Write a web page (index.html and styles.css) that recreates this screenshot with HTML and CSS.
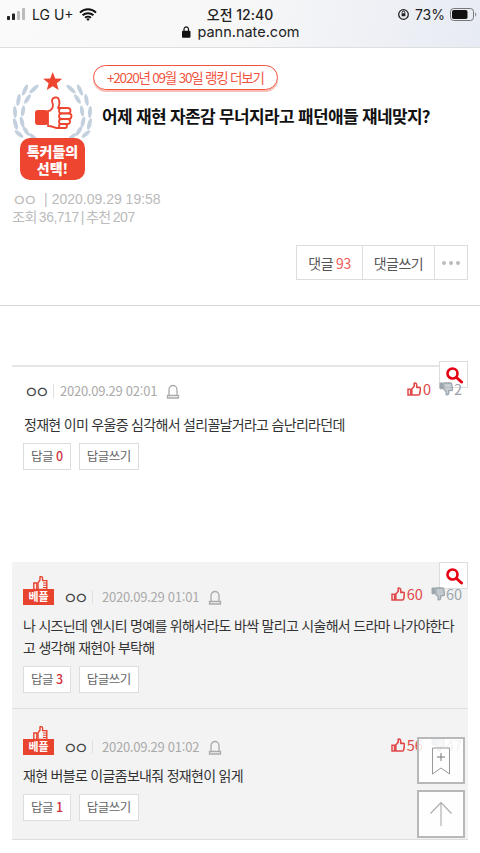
FILE: index.html
```html
<!DOCTYPE html>
<html lang="ko">
<head>
<meta charset="utf-8">
<title>pann.nate.com</title>
<link rel="stylesheet" href="styles.css">
</head>
<body>
<div class="page">
  <svg class="defs" width="0" height="0"><defs>
    <g id="thumb"><path d="M1 7.200h2.600v5.800H1z" fill="none" stroke="currentColor" stroke-width="1.500"/><path d="M4.800 7L7.200 4.200V1.300c1.500-.5 2.500.3 2.500 1.800v2.300h2.600c.8 0 1.200.5 1.200 1.200l-.8 5.300c-.1.6-.5 1.100-1.200 1.100H4.800z" fill="none" stroke="currentColor" stroke-width="1.600" stroke-linejoin="round"/></g>
    <g id="thumbdown"><path d="M1 1h2.600v5.800H1z" fill="currentColor" stroke="currentColor" stroke-width="1"/><path d="M4.800 7L7.200 9.800v2.900c1.500.5 2.500-.3 2.500-1.800V8.600h2.600c.8 0 1.200-.5 1.200-1.200l-.8-5.300C12.600 1.500 12.200 1 11.500 1H4.800z" fill="currentColor" fill-opacity=".55" stroke="currentColor" stroke-width="1.300" stroke-linejoin="round"/></g>
    <g id="bell"><path d="M3 11V5.500a4 4 0 0 1 8 0V11M1.500 11.500h11v2.500h-11z" fill="none" stroke="#aaa" stroke-width="1.300"/></g>
    <g id="lens"><circle cx="7.500" cy="7.500" r="5" fill="none" stroke="#e60012" stroke-width="2.600"/><path d="M11.500 11.500l5 4.500" stroke="#e60012" stroke-width="3" stroke-linecap="round"/></g>
    <g id="bestthumb"><path d="M0.800 7h3v6.500h-3z" fill="none" stroke="#e8432e" stroke-width="1.400"/><path d="M5 6.800L7 4V.8c1.600-.5 2.600.3 2.600 1.600V4.600h4.200v8.900H5z" fill="none" stroke="#e8432e" stroke-width="1.400"/><path d="M10 7h3.500M10 9.300h3.500M10 11.500h3.500" stroke="#e8432e" stroke-width="1.100"/></g>
    <g id="laurel" fill="#c3d0de">
      <ellipse cx="22" cy="19" rx="2" ry="6" transform="rotate(48 22 19)"/>
      <ellipse cx="13" cy="20" rx="2" ry="6" transform="rotate(25 13 20)"/>
      <ellipse cx="15.500" cy="29" rx="2" ry="5.500" transform="rotate(32 15.500 29)"/>
      <ellipse cx="6.500" cy="30" rx="2" ry="6" transform="rotate(10 6.500 30)"/>
      <ellipse cx="11" cy="41" rx="2" ry="5.500" transform="rotate(8 11 41)"/>
      <ellipse cx="3" cy="42" rx="2" ry="6" transform="rotate(-3 3 42)"/>
      <ellipse cx="10" cy="52" rx="2" ry="5.500" transform="rotate(-14 10 52)"/>
      <ellipse cx="3.500" cy="54" rx="2" ry="6" transform="rotate(-15 3.500 54)"/>
      <ellipse cx="14" cy="61" rx="2" ry="5.500" transform="rotate(-32 14 61)"/>
      <ellipse cx="7" cy="64" rx="2" ry="5.500" transform="rotate(-50 7 64)"/>
      <ellipse cx="21" cy="67" rx="1.800" ry="5" transform="rotate(-50 21 67)"/>
    </g>
  </defs></svg>

  <header class="status">
    <div class="status-row">
      <div class="status-left">
        <svg class="signal" width="20" height="12" viewBox="0 0 20 12"><rect x="0" y="8" width="3" height="4" rx=".7" fill="#222"/><rect x="5" y="5.500" width="3" height="6.500" rx=".7" fill="#222"/><rect x="10" y="3" width="3" height="9" rx=".7" fill="#bbb"/><rect x="15" y="0" width="3" height="12" rx=".7" fill="#bbb"/></svg>
        <span>LG U+</span>
        <svg class="wifi" width="18" height="13" viewBox="0 0 18 13"><path d="M1 4.600a11.500 11.500 0 0 1 16 0M3.600 7.300a7.800 7.800 0 0 1 10.800 0M6.100 9.800a4.200 4.200 0 0 1 5.800 0" fill="none" stroke="#111" stroke-width="2"/><path d="M9 13l-1.700-1.900a2.400 2.400 0 0 1 3.400 0z" fill="#111"/></svg>
      </div>
      <div class="status-time">오전 12:40</div>
      <div class="status-right">
        <svg width="13" height="13" viewBox="0 0 13 13"><circle cx="6.500" cy="6.500" r="4.800" fill="none" stroke="#222" stroke-width="1.300"/><rect x="4.600" y="5.200" width="3.800" height="3" rx=".5" fill="#222"/><path d="M5.200 5.400V4.400a1.300 1.300 0 0 1 2.600 0v1" fill="none" stroke="#222"/></svg>
        <span>73%</span>
        <svg width="27" height="13" viewBox="0 0 27 13"><rect x=".5" y=".5" width="23" height="12" rx="3.200" fill="none" stroke="#777"/><rect x="2" y="2" width="15.500" height="9" rx="1.800" fill="#111"/><path d="M25 4.500c1 .3 1.400 1 1.400 2s-.4 1.700-1.400 2z" fill="#999"/></svg>
      </div>
    </div>
    <div class="status-url">
      <svg width="9" height="12" viewBox="0 0 9 12"><rect x="0" y="4.700" width="8.500" height="7" rx="1" fill="#111"/><path d="M2 5V3.200a2.250 2.250 0 0 1 4.500 0V5" fill="none" stroke="#111" stroke-width="1.200"/></svg>
      <span>pann.nate.com</span>
    </div>
  </header>

  <section class="post">
    <div class="post-main">
      <svg class="medal" width="80" height="112" viewBox="0 0 80 112">
        <path d="M40.700 2l2.500 6.500 7 .3-5.400 4.400 1.800 6.800-5.900-3.800-5.900 3.800 1.800-6.800-5.400-4.400 7-.3z" fill="#ee4530"/>
        <use href="#laurel"/>
        <use href="#laurel" transform="translate(81 0) scale(-1 1)"/>
        <rect x="23" y="40" width="13" height="15" rx="3" fill="#ee4530"/>
        <path d="M36 41c3 0 5-3 5-6l-1-4c0-4 6-5 7-1 1 3-.5 7-1 8h6v20H45c-3 0-4-2-9-2z" fill="#fff" stroke="#ee4530" stroke-width="1.800" stroke-linejoin="round"/>
        <g fill="#fff" stroke="#ee4530" stroke-width="1.800"><rect x="47" y="38" width="11.500" height="5.500" rx="2.700"/><rect x="47" y="43.500" width="12.500" height="5.500" rx="2.700"/><rect x="47" y="49" width="11" height="5" rx="2.500"/><rect x="47" y="54" width="8" height="4" rx="2"/></g>
        <rect x="8" y="68" width="65" height="42" rx="10" fill="#ee4530"/>
        <text x="40.500" y="87" text-anchor="middle" class="medal-text">톡커들의</text>
        <text x="40.500" y="104" text-anchor="middle" class="medal-text">선택!</text>
      </svg>
      <div class="post-head">
        <a class="rank-pill">+2020년 09월 30일 랭킹 더보기</a>
        <h1 class="post-title">어제 재현 자존감 무너지라고 패던애들 쟤네맞지?</h1>
      </div>
    </div>
    <div class="post-meta"><span class="post-author">ㅇㅇ</span><span class="sep">|</span>2020.09.29 19:58</div>
    <div class="post-stats">조회 36,717 | 추천 207</div>
    <div class="actions-row">
      <div class="actions">
        <a class="action action-count">댓글 <em>93</em></a>
        <a class="action action-write">댓글쓰기</a>
        <a class="action action-more"><i></i><i></i><i></i></a>
      </div>
    </div>
  </section>

  <main class="comments">
    <article class="comment first">
      <a class="zoom-btn"><svg width="18" height="18" viewBox="0 0 18 18"><use href="#lens"/></svg></a>
      <div class="c-head">
        <span class="c-author">ㅇㅇ</span><span class="c-sep"></span><span class="c-date">2020.09.29 02:01</span>
        <svg class="bell" width="14" height="15" viewBox="0 0 14 15"><use href="#bell"/></svg>
        <div class="votes">
          <span class="up"><svg width="14" height="14" viewBox="0 0 14 14"><use href="#thumb"/></svg>0</span>
          <span class="down"><svg width="14" height="14" viewBox="0 0 14 14"><use href="#thumbdown"/></svg>2</span>
        </div>
      </div>
      <p class="c-text">정재현 이미 우울증 심각해서 설리꼴날거라고 슴난리라던데</p>
      <div class="c-btns"><a class="c-btn">답글 <b>0</b></a><a class="c-btn">답글쓰기</a></div>
    </article>

    <article class="comment best">
      <a class="zoom-btn"><svg width="18" height="18" viewBox="0 0 18 18"><use href="#lens"/></svg></a>
      <div class="c-head">
        <span class="best-badge"><svg class="best-thumb" width="15" height="14" viewBox="0 0 15 14"><use href="#bestthumb"/></svg><span class="best-label">베플</span></span>
        <span class="c-author">ㅇㅇ</span><span class="c-sep"></span><span class="c-date">2020.09.29 01:01</span>
        <svg class="bell" width="14" height="15" viewBox="0 0 14 15"><use href="#bell"/></svg>
        <div class="votes">
          <span class="up"><svg width="14" height="14" viewBox="0 0 14 14"><use href="#thumb"/></svg>60</span>
          <span class="down"><svg width="14" height="14" viewBox="0 0 14 14"><use href="#thumbdown"/></svg>60</span>
        </div>
      </div>
      <p class="c-text">나 시즈닌데 엔시티 명예를 위해서라도 바싹 말리고 시술해서 드라마 나가야한다고 생각해 재현아 부탁해</p>
      <div class="c-btns"><a class="c-btn">답글 <b>3</b></a><a class="c-btn">답글쓰기</a></div>
    </article>

    <article class="comment best">
      <div class="c-head">
        <span class="best-badge"><svg class="best-thumb" width="15" height="14" viewBox="0 0 15 14"><use href="#bestthumb"/></svg><span class="best-label">베플</span></span>
        <span class="c-author">ㅇㅇ</span><span class="c-sep"></span><span class="c-date">2020.09.29 01:02</span>
        <svg class="bell" width="14" height="15" viewBox="0 0 14 15"><use href="#bell"/></svg>
        <div class="votes">
          <span class="up"><svg width="14" height="14" viewBox="0 0 14 14"><use href="#thumb"/></svg>56</span>
          <span class="down"><svg width="14" height="14" viewBox="0 0 14 14"><use href="#thumbdown"/></svg>47</span>
        </div>
      </div>
      <p class="c-text">재현 버블로 이글좀보내줘 정재현이 읽게</p>
      <div class="c-btns"><a class="c-btn">답글 <b>1</b></a><a class="c-btn">답글쓰기</a></div>
    </article>
  </main>

  <div class="float-btns">
    <a class="float-btn"><svg width="20" height="28" viewBox="0 0 20 28"><path d="M1.500 1h17v26l-8.500-6-8.500 6z" fill="none" stroke="#999"/><path d="M6 10h8M10 6v8" stroke="#777"/></svg></a>
    <a class="float-btn"><svg width="24" height="26" viewBox="0 0 24 26"><path d="M1.500 12.500L12 1.500l10.500 11M12 1.500V25" fill="none" stroke="#aaa" stroke-width="1.100"/></svg></a>
  </div>
</div>
</body>
</html>
```
FILE: styles.css
```css
* { box-sizing: border-box; }
html, body { margin: 0; padding: 0; }
body { background: #fff; font-family: "Noto Sans CJK KR", "Noto Sans", sans-serif; color: #333; }
.page { position: relative; width: 480px; height: 853px; overflow: hidden; background: #fff; }
a { text-decoration: none; color: inherit; }
.defs { position: absolute; }

.status { height: 48px; padding: 4px 20px 0 7px; background: linear-gradient(100deg, #fafafa 0%, #f7f7f8 50%, #e7ebf3 100%); border-bottom: 1px solid #dedede; font-family: Inter, "Noto Sans CJK KR", sans-serif; color: #222; }
.status-row { display: grid; grid-template-columns: 1fr auto 1fr; align-items: center; height: 17px; font-size: 14px; }
.status-left { display: flex; align-items: center; gap: 5px; }
.status-time { font-weight: 500; font-size: 14px; margin-left: 13px; }
.status-right { display: flex; align-items: center; justify-content: flex-end; gap: 5px; margin-right: -17px; }
.status-url { display: flex; justify-content: center; align-items: center; gap: 6px; height: 21px; margin-right: -13px; padding-left: 2px; font-size: 14.500px; color: #222; }

.post { height: 258px; padding: 16px 12px 0; border-bottom: 1px solid #d8d8d8; }
.post-main { display: flex; gap: 10px; align-items: flex-start; height: 118px; }
.medal { flex: none; margin-top: 6px; }
.medal-text { font-family: "Noto Sans CJK KR", sans-serif; font-size: 14px; font-weight: 900; fill: #fff; }
.rank-pill { display: inline-block; height: 25px; margin: -1px 0 0 -9px; line-height: 22px; padding: 0 13px; border: 1px solid #f2533f; border-radius: 13px; color: #f2533f; font-size: 13.500px; letter-spacing: -1.200px; white-space: nowrap; box-shadow: 0 2px 0 #f9c0b8; }
.post-title { margin: 14px 0 0; font-size: 17px; line-height: 24px; font-weight: 700; letter-spacing: -.670px; color: #111; white-space: nowrap; }
.post-meta { margin-top: 7px; height: 20px; font-size: 14px; line-height: 20px; color: #bbb; font-family: "Liberation Sans", "Noto Sans CJK KR", sans-serif; display: flex; align-items: center; }
.post-author { width: 33px; font-size: 16px; line-height: 20px; letter-spacing: -3.700px; font-family: "Noto Sans CJK KR", sans-serif; color: #bbb; }
.sep { margin-right: 4px; margin-left: -1px; }
.post-stats { height: 19px; margin-top: -1px; font-size: 14px; line-height: 19px; color: #bbb; letter-spacing: -.500px; word-spacing: -1.300px; font-family: "Liberation Sans", "Noto Sans CJK KR", sans-serif; }
.actions-row { display: flex; justify-content: flex-end; margin-top: 18px; }
.actions { display: flex; height: 35px; border: 1px solid #ddd; font-size: 14px; letter-spacing: -.500px; color: #555; }
.action { display: flex; align-items: center; justify-content: center; border-right: 1px solid #ddd; }
.action em { font-style: normal; color: #f25a5a; margin-left: 3px; }
.action-count { width: 66px; }
.action-write { width: 72px; }
.action-more { width: 32px; gap: 3px; border-right: 0; }
.action-more i { width: 4px; height: 4px; border-radius: 50%; background: #bbb; }

.comments { margin: 59px 12px 0; }
.comment { position: relative; padding: 0 12px; }
.comment.first { height: 197px; border-top: 2px solid #e5e5e5; padding-top: 12px; }
.comment.best { background: #f3f3f3; border-bottom: 1px solid #ddd; padding: 14px 12px 0 11px; }
.comment.best:nth-child(2) { height: 147px; }
.comment.best:nth-child(3) { height: 131px; padding-top: 17px; }
.c-head { display: flex; align-items: center; height: 24px; font-size: 13px; }
.comment.best .c-head { height: 29px; align-items: flex-end; }
.best-badge { display: flex; flex-direction: column; align-items: center; width: 31px; margin-right: 9px; }
.best-thumb { margin-bottom: -1px; margin-left: 3px; }
.best-label { display: block; width: 31px; height: 16px; background: #e8432e; color: #fff; font-size: 11px; font-weight: 700; line-height: 15px; text-align: center; }
.c-author { width: 21px; height: 16px; line-height: 16px; font-size: 16px; letter-spacing: -3.700px; color: #444; white-space: nowrap; }
.c-sep { width: 1px; height: 14px; background: #e0e0e0; margin: 0 6px 0 8px; }
.comment.best .c-sep { margin-bottom: 1px; margin-right: 9px; }
.c-date { color: #aaa; font-size: 13px; line-height: 16px; letter-spacing: -.250px; }
.bell { margin-left: 9px; }
.votes { position: absolute; right: 6px; top: 11px; display: flex; gap: 8px; font-size: 14.500px; }
.comment.best .votes { top: 21px; }
.comment.best:nth-child(3) .votes { top: 25px; }
.up { color: #e1484a; display: flex; align-items: center; gap: 2px; }
.down { color: #9aa5ad; display: flex; align-items: center; gap: 1px; }
.c-text { margin: 10px 0 0; font-size: 14px; line-height: 22px; letter-spacing: -.700px; color: #333; }
.comment.best .c-text { margin-top: 9px; }
.c-btns { display: flex; gap: 8px; margin-top: 8px; }
.comment.first .c-btns { margin-left: -1px; }
.c-btn { display: block; height: 27px; padding: 0 7px; line-height: 24px; border: 1px solid #ddd; background: #fff; font-size: 12.500px; letter-spacing: -.500px; color: #666; }
.c-btn b { color: #d0323e; font-weight: 500; }

.zoom-btn { position: absolute; right: 0; top: 0; width: 29px; height: 27px; display: flex; align-items: center; justify-content: center; background: #fff; border: 1px solid #ddd; }
.comment.first .zoom-btn { top: -6px; }
.float-btns { position: absolute; left: 417px; top: 737px; display: flex; flex-direction: column; gap: 6px; }
.float-btn { width: 48px; height: 47px; display: flex; align-items: center; justify-content: center; background: rgba(255,255,255,.85); border: 2px solid #b8b8b8; }
.float-btn + .float-btn { height: 48px; }
```
